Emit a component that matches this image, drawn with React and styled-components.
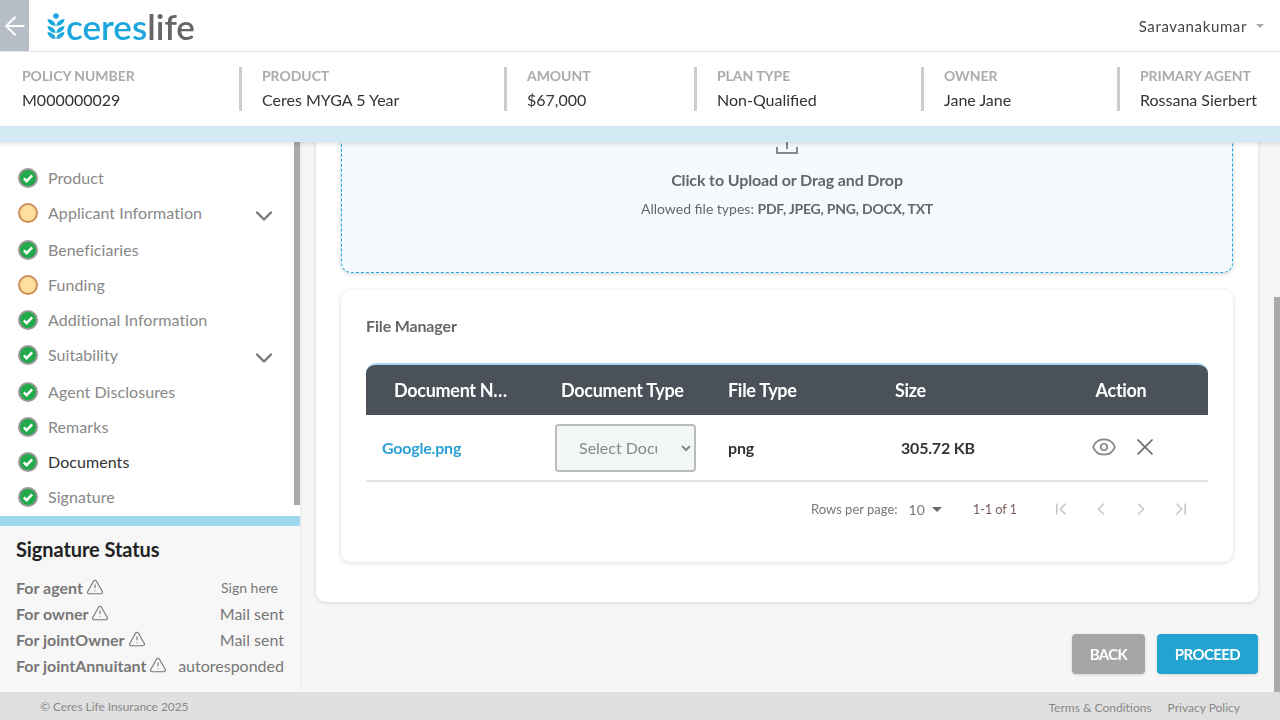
import React, { useLayoutEffect, useRef } from "react";
import styled, { createGlobalStyle } from "styled-components";
import {
  ArrowLeft,
  ChevronDown,
  ChevronFirst,
  ChevronLast,
  ChevronLeft,
  ChevronRight,
  Eye,
  TriangleAlert,
  X,
} from "lucide-react";

const GlobalStyle = createGlobalStyle`
  html, body { margin: 0; height: 100%; overflow: hidden; }
  body { font-family: "Lato", "Liberation Sans", sans-serif; background: #f6f6f6; }
  * { box-sizing: border-box; }
`;

const Page = styled.div`
  height: 720px;
  display: flex;
  flex-direction: column;
`;

const Header = styled.header`
  position: relative;
  z-index: 2;
  background: #fff;
  box-shadow: 0 2px 4px rgba(0, 0, 0, 0.12);
`;

const TopBar = styled.div`
  height: 52px;
  display: flex;
  align-items: center;
  border-bottom: 1px solid #e4e4e4;
`;

const BackButton = styled.button`
  width: 29px;
  height: 51px;
  padding: 0;
  border: 0;
  background: #b8bec7;
  color: #fff;
  display: flex;
  align-items: center;
  justify-content: center;
  overflow: hidden;
  svg { flex: none; }
`;

const Logo = styled.div`
  margin-left: 18px;
  display: flex;
  align-items: center;
  gap: 1px;
  font-size: 35px;
  line-height: 40px;
  font-weight: 600;
  color: #1ea7dc;
  span { color: #666; }
`;

const User = styled.div`
  margin-left: auto;
  padding-right: 16px;
  display: flex;
  align-items: center;
  gap: 9px;
  font-size: 15px;
  letter-spacing: 0.62px;
  color: #444;
`;

const Caret = styled.i`
  display: block;
  width: 0;
  height: 0;
  border-left: ${(p) => p.$size}px solid transparent;
  border-right: ${(p) => p.$size}px solid transparent;
  border-top: ${(p) => p.$size}px solid ${(p) => p.$color};
`;

const PolicyBar = styled.div`
  height: 74px;
  display: flex;
  align-items: center;
`;

const PolicyItem = styled.div`
  width: ${(p) => p.$width}px;
  height: 44px;
  flex: none;
  padding-left: ${(p) => (p.$first ? 22 : 20)}px;
  border-left: ${(p) => (p.$first ? "none" : "3px solid #ccc")};
`;

const PolicyLabel = styled.div`
  font-size: 14px;
  line-height: 17px;
  font-weight: 700;
  letter-spacing: -0.05px;
  color: #aaa;
`;

const PolicyValue = styled.div`
  margin-top: 6px;
  font-size: 16px;
  line-height: 19px;
  color: #333;
  white-space: nowrap;
`;

const Strip = styled.div`
  height: 16px;
  background: #d3e9f4;
`;

const Body = styled.div`
  flex: 1;
  min-height: 0;
  display: flex;
`;

const Sidebar = styled.aside`
  width: 300px;
  flex: none;
  display: flex;
  flex-direction: column;
  box-shadow: 1px 0 3px rgba(0, 0, 0, 0.06);
  position: relative;
`;

const ScrollArea = styled.div`
  position: relative;
  flex: 1;
  min-width: 0;
  min-height: 0;
`;

// the page's scrollbars are 6px wide grey bars, always visible
const ScrollThumb = styled.div`
  position: absolute;
  right: 0;
  top: ${(p) => p.$top}px;
  width: 6px;
  height: ${(p) => p.$height}px;
  background: #aaa;
`;

const StepList = styled.nav`
  height: 100%;
  background: #fff;
  overflow-y: auto;
  &::-webkit-scrollbar { display: none; }
`;

const Steps = styled.div`
  padding: 18px 22px 13px 18px;
`;

const Step = styled.div`
  height: ${(p) => (p.$expandable ? 37 : 35)}px;
  padding-bottom: ${(p) => (p.$expandable ? 2 : 0)}px;
  display: flex;
  align-items: center;
  gap: 10px;
  font-size: 16px;
  letter-spacing: 0.07px;
  color: ${(p) => (p.$active ? "#333" : "#888")};
`;

const StepChevron = styled(ChevronDown)`
  margin-left: auto;
  margin-top: 7px;
  color: #777;
`;

const StatusPanel = styled.section`
  height: 176px;
  flex: none;
  padding: 11px 16px 0;
  background: #f7f7f7;
  border-top: 10px solid #9dd6ef;
`;

const StatusTitle = styled.h3`
  margin: 0 0 13px;
  font-size: 20px;
  line-height: 24px;
  font-weight: 700;
  letter-spacing: -0.08px;
  color: #222;
`;

const StatusRow = styled.div`
  height: 26px;
  display: flex;
  align-items: center;
  justify-content: space-between;
`;

const StatusLabel = styled.div`
  display: flex;
  align-items: center;
  gap: 3px;
  font-size: 16px;
  font-weight: 700;
  color: #777;
`;

const StatusValue = styled.div`
  font-size: ${(p) => (p.$small ? 14 : 16)}px;
  padding-right: ${(p) => (p.$small ? 6 : 0)}px;
  color: #777;
`;

const Main = styled.main`
  height: 100%;
  padding: 0 22px 0 16px;
  overflow-y: auto;
  &::-webkit-scrollbar { display: none; }
`;

const Card = styled.section`
  padding: 40px 25px;
  background: #fff;
  border-radius: 10px;
  box-shadow: 0 1px 4px rgba(0, 0, 0, 0.14);
`;

const DropZone = styled.div`
  height: 306px;
  padding-top: 164px;
  display: flex;
  flex-direction: column;
  align-items: center;
  background: #f5faff;
  border: 1px dashed #1ea7dc;
  border-radius: 10px;
  box-shadow: 0 1px 4px rgba(0, 0, 0, 0.18);
  color: #666;
`;

const DropTitle = styled.div`
  margin-top: 14px;
  font-size: 16px;
  line-height: 20px;
  font-weight: 700;
  letter-spacing: -0.13px;
`;

const DropHint = styled.div`
  margin-top: 10px;
  font-size: 14px;
  line-height: 18px;
  b { letter-spacing: -0.22px; }
`;

const FileCard = styled.div`
  margin-top: 17px;
  height: 272px;
  padding: 0 25px;
  background: #fff;
  border-radius: 10px;
  box-shadow: 0 1px 5px rgba(0, 0, 0, 0.14);
`;

const FileTitle = styled.h4`
  margin: 0;
  height: 73px;
  padding-top: 26px;
  font-size: 16px;
  line-height: 20px;
  font-weight: 700;
  letter-spacing: -0.15px;
  color: #666;
`;

const HeadRow = styled.div`
  height: 52px;
  display: grid;
  grid-template-columns: repeat(4, 167px) 174px;
  align-items: center;
  background: #4a5159;
  border-top: 2px solid #a8d4f0;
  border-radius: 10px 10px 0 0;
`;

const HeadCell = styled.div`
  padding: 0 ${(p) => p.$right ?? 10}px 0 ${(p) => (p.$center ? 0 : 28)}px;
  overflow: hidden;
  white-space: nowrap;
  text-overflow: ellipsis;
  font-size: 18px;
  font-weight: 700;
  letter-spacing: -0.3px;
  color: #fff;
  text-align: ${(p) => (p.$center ? "center" : "left")};
`;

const DataRow = styled.div`
  height: 67px;
  display: grid;
  grid-template-columns: repeat(4, 167px) 174px;
  align-items: center;
  border-bottom: 2px solid #e4e4e4;
`;

const FileLink = styled.a`
  padding-left: 16px;
  font-size: 16px;
  font-weight: 700;
  letter-spacing: -0.2px;
  color: #2aa0d4;
`;

const TypeSelect = styled.select`
  margin-left: 22px;
  width: 141px;
  height: 48px;
  padding: 0 21px 0 18px;
  background-color: #f3f6f7;
  border: 2px solid #bbb;
  border-radius: 4px;
  font-family: inherit;
  font-size: 16px;
  color: #888;
`;

const DataCell = styled.div`
  padding-left: ${(p) => p.$indent}px;
  font-size: 16px;
  font-weight: 700;
  letter-spacing: -0.2px;
  color: #333;
`;

const ActionCell = styled.div`
  padding: 0 0 2px 57px;
  display: flex;
  align-items: center;
  gap: 14px;
  color: #888;
`;

const Pager = styled.div`
  height: 54px;
  display: flex;
  align-items: center;
  padding-left: 445px;
  font-size: 13px;
  color: #777;
`;

const PerPage = styled.span`
  margin-left: 11px;
  margin-right: 7px;
  font-size: 14px;
`;

const PageCount = styled.span`
  margin-left: 31px;
  margin-right: 34px;
  font-size: 13px;
  letter-spacing: -0.2px;
  color: #7b5f5f;
`;

const PageIcons = styled.div`
  display: flex;
  gap: 20px;
  color: #c4c4c4;
`;

const Actions = styled.div`
  margin-top: 32px;
  padding-bottom: 18px;
  display: flex;
  justify-content: flex-end;
  gap: 12px;
`;

const ActionButton = styled.button`
  width: ${(p) => p.$width}px;
  height: 40px;
  padding: 0;
  border: 0;
  border-radius: 4px;
  background: ${(p) => p.$bg};
  box-shadow: 0 1px 3px rgba(0, 0, 0, 0.15);
  font-family: inherit;
  font-size: 15px;
  font-weight: 700;
  letter-spacing: -0.6px;
  color: #fff;
`;

const Footer = styled.footer`
  height: 28px;
  flex: none;
  position: relative;
  z-index: 1;
  padding: 0 40px;
  display: flex;
  align-items: center;
  background: #e0e0e0;
  font-size: 12px;
  letter-spacing: -0.06px;
  color: #888;
`;

const FooterLinks = styled.div`
  margin-left: auto;
  display: flex;
  gap: 16px;
  padding-top: 2px;
  letter-spacing: 0;
`;

const policy = [
  ["POLICY NUMBER", "M000000029", 239],
  ["PRODUCT", "Ceres MYGA 5 Year", 265],
  ["AMOUNT", "$67,000", 190],
  ["PLAN TYPE", "Non-Qualified", 227],
  ["OWNER", "Jane Jane", 196],
  ["PRIMARY AGENT", "Rossana Sierbert", 162],
];

const steps = [
  { name: "Product", done: true },
  { name: "Applicant Information", expandable: true },
  { name: "Beneficiaries", done: true },
  { name: "Funding" },
  { name: "Additional Information", done: true },
  { name: "Suitability", done: true, expandable: true },
  { name: "Agent Disclosures", done: true },
  { name: "Remarks", done: true },
  { name: "Documents", done: true, active: true },
  { name: "Signature", done: true },
];

const signers = [
  ["For agent", "Sign here", true],
  ["For owner", "Mail sent"],
  ["For jointOwner", "Mail sent"],
  ["For jointAnnuitant", "autoresponded"],
];

const LogoMark = () => (
  <svg width="18" height="26" viewBox="0 0 18 26" fill="#1ea7dc">
    <circle cx="9" cy="3" r="2.8" />
    {[0, 7, 13].map((y) => (
      <g key={y} transform={`translate(0 ${y})`}>
        <path d="M.5 6C4.5 6.2 8.4 8.6 8.6 13 4.4 12.8.8 10.4.5 6Z" />
        <path d="M17.5 6C13.5 6.2 9.6 8.6 9.4 13 13.6 12.8 17.2 10.4 17.5 6Z" />
      </g>
    ))}
  </svg>
);

const StepIcon = ({ done }) => (
  <svg width="20" height="20" viewBox="0 0 20 20">
    {done ? (
      <>
        <circle cx="10" cy="10" r="9" fill="#22a94a" stroke="#999" strokeWidth="2" />
        <path d="M5.8 10.4 8.6 13.2 14.2 7.4" fill="none" stroke="#fff" strokeWidth="2.4" />
      </>
    ) : (
      <circle cx="10" cy="10" r="9" fill="#ffdf9e" stroke="#c98f5a" strokeWidth="2" />
    )}
  </svg>
);

const UploadIcon = () => (
  <svg width="24" height="24" viewBox="0 0 24 24" fill="none" stroke="#888" strokeWidth="2">
    <path d="M2 15v6h20v-6" />
    <path d="M12 17V4" />
    <path d="M7 8l5-5 5 5" />
  </svg>
);

export default function App() {
  const mainRef = useRef(null);

  // the reference was taken scrolled down to the file manager
  useLayoutEffect(() => {
    mainRef.current.scrollTop = 215;
  }, []);

  return (
    <Page>
      <GlobalStyle />
      <Header>
        <TopBar>
          <BackButton>
            <ArrowLeft size={30} strokeWidth={1.5} />
          </BackButton>
          <Logo>
            <LogoMark />
            <div>
              ceres<span>life</span>
            </div>
          </Logo>
          <User>
            Saravanakumar
            <Caret $size={4} $color="#aaa" />
          </User>
        </TopBar>
        <PolicyBar>
          {policy.map(([label, value, width], i) => (
            <PolicyItem key={label} $width={width} $first={i === 0}>
              <PolicyLabel>{label}</PolicyLabel>
              <PolicyValue>{value}</PolicyValue>
            </PolicyItem>
          ))}
        </PolicyBar>
        <Strip />
      </Header>

      <Body>
        <Sidebar>
          <ScrollArea>
            <StepList>
              <Steps>
                {steps.map((s) => (
                  <Step key={s.name} $expandable={s.expandable} $active={s.active}>
                    <StepIcon done={s.done} />
                    {s.name}
                    {s.expandable && <StepChevron size={28} strokeWidth={2} />}
                  </Step>
                ))}
              </Steps>
            </StepList>
            <ScrollThumb $top={0} $height={363} />
          </ScrollArea>
          <StatusPanel>
            <StatusTitle>Signature Status</StatusTitle>
            {signers.map(([label, value, small]) => (
              <StatusRow key={label}>
                <StatusLabel>
                  {label}
                  <TriangleAlert size={18} strokeWidth={1.5} />
                </StatusLabel>
                <StatusValue $small={small}>{value}</StatusValue>
              </StatusRow>
            ))}
          </StatusPanel>
        </Sidebar>

        <ScrollArea>
          <Main ref={mainRef}>
            <Card>
              <DropZone>
                <UploadIcon />
                <DropTitle>Click to Upload or Drag and Drop</DropTitle>
                <DropHint>
                  Allowed file types: <b>PDF, JPEG, PNG, DOCX, TXT</b>
                </DropHint>
              </DropZone>
              <FileCard>
                <FileTitle>File Manager</FileTitle>
                <HeadRow>
                  <HeadCell $right={25}>Document Name</HeadCell>
                  <HeadCell>Document Type</HeadCell>
                  <HeadCell>File Type</HeadCell>
                  <HeadCell>Size</HeadCell>
                  <HeadCell $center $right={0}>Action</HeadCell>
                </HeadRow>
                <DataRow>
                  <FileLink>Google.png</FileLink>
                  <TypeSelect defaultValue="">
                    <option value="">Select Document Type</option>
                  </TypeSelect>
                  <DataCell $indent={28}>png</DataCell>
                  <DataCell $indent={34}>305.72 KB</DataCell>
                  <ActionCell>
                    <Eye size={26} strokeWidth={1.6} />
                    <X size={28} strokeWidth={1.5} color="#666" />
                  </ActionCell>
                </DataRow>
                <Pager>
                  Rows per page:
                  <PerPage>10</PerPage>
                  <Caret $size={5} $color="#666" />
                  <PageCount>1-1 of 1</PageCount>
                  <PageIcons>
                    <ChevronFirst size={20} strokeWidth={1.8} />
                    <ChevronLeft size={20} strokeWidth={1.8} />
                    <ChevronRight size={20} strokeWidth={1.8} />
                    <ChevronLast size={20} strokeWidth={1.8} />
                  </PageIcons>
                </Pager>
              </FileCard>
            </Card>
            <Actions>
              <ActionButton $width={73} $bg="#a6a6a6">BACK</ActionButton>
              <ActionButton $width={101} $bg="#23a3d0">PROCEED</ActionButton>
            </Actions>
          </Main>
          <ScrollThumb $top={155} $height={395} />
        </ScrollArea>
      </Body>

      <Footer>
        © Ceres Life Insurance 2025
        <FooterLinks>
          <span>Terms &amp; Conditions</span>
          <span>Privacy Policy</span>
        </FooterLinks>
      </Footer>
    </Page>
  );
}
